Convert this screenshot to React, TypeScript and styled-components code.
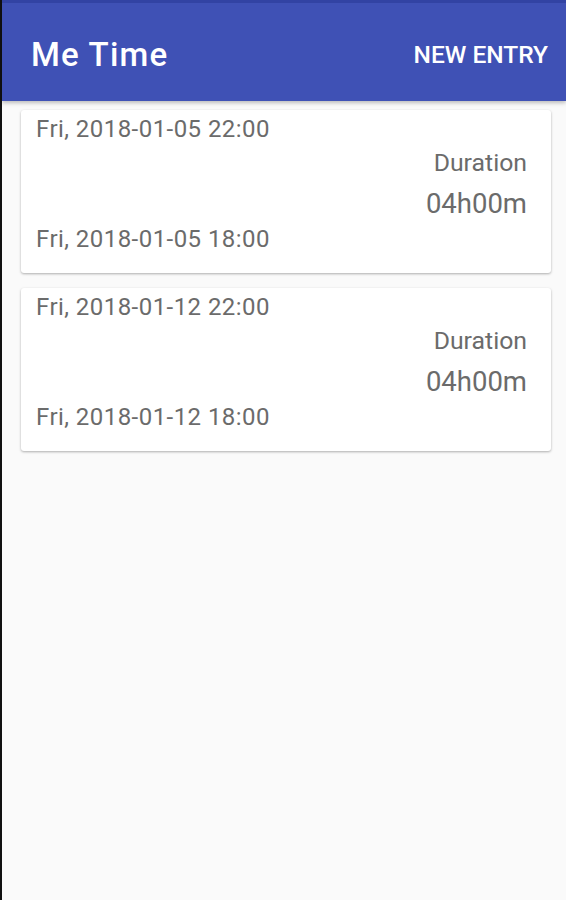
import React from "react";
import styled, { createGlobalStyle } from "styled-components";

const Global = createGlobalStyle`
  html, body { margin: 0; padding: 0; background: #fafafa; }
  body { font-family: Roboto, "Noto Sans", sans-serif; }
  #root { min-height: 900px; }
`;

const Screen = styled.div`
  min-height: 900px;
  background: #fafafa;
  border-left: 2px solid #111;
  box-sizing: border-box;
  display: flex;
  flex-direction: column;
`;

const AppBar = styled.header`
  background: #3f51b5;
  border-top: 3px solid #3243a3;
  height: 94px;
  box-sizing: content-box;
  display: flex;
  align-items: center;
  justify-content: space-between;
  padding: 4px 18px 0 29px;
  box-shadow: 0 2px 4px rgba(0, 0, 0, 0.25);
  position: relative;
  z-index: 1;
`;

const Title = styled.h1`
  margin: 0;
  color: #fff;
  font-family: Roboto, sans-serif;
  font-weight: 500;
  font-size: 33px;
  letter-spacing: 1.2px;
`;

const Action = styled.button`
  background: none;
  border: none;
  padding: 0;
  color: #fff;
  font-family: Roboto, sans-serif;
  font-weight: 500;
  font-size: 24.5px;
  text-transform: uppercase;
`;

const List = styled.main`
  display: flex;
  flex-direction: column;
  gap: 15px;
  padding: 9px 15px 0 19px;
`;

const Card = styled.article`
  background: #fff;
  border-radius: 3px;
  box-shadow: 0 1px 3px rgba(0, 0, 0, 0.2), 0 1px 2px rgba(0, 0, 0, 0.12);
  height: 163px;
  box-sizing: border-box;
  padding: 5px 24px 0 15px;
  display: flex;
  flex-direction: column;
  color: #6b6b6b;
`;

const DateLine = styled.div`
  font-size: 24px;
  letter-spacing: 0.45px;
  line-height: 28px;
`;

const Right = styled.div<{ $size: number; $h: number }>`
  text-align: right;
  font-size: ${(p) => p.$size}px;
  line-height: ${(p) => p.$h}px;
`;

const entries = [
  { end: "Fri, 2018-01-05 22:00", start: "Fri, 2018-01-05 18:00", dur: "04h00m" },
  { end: "Fri, 2018-01-12 22:00", start: "Fri, 2018-01-12 18:00", dur: "04h00m" },
];

export default function App() {
  return (
    <>
      <Global />
      <Screen>
        <AppBar>
          <Title>Me Time</Title>
          <Action>New Entry</Action>
        </AppBar>
        <List>
          {entries.map((e) => (
            <Card key={e.end}>
              <DateLine>{e.end}</DateLine>
              <Right $size={24.8} $h={40}>Duration</Right>
              <Right $size={27.5} $h={42}>{e.dur}</Right>
              <DateLine>{e.start}</DateLine>
            </Card>
          ))}
        </List>
      </Screen>
    </>
  );
}
